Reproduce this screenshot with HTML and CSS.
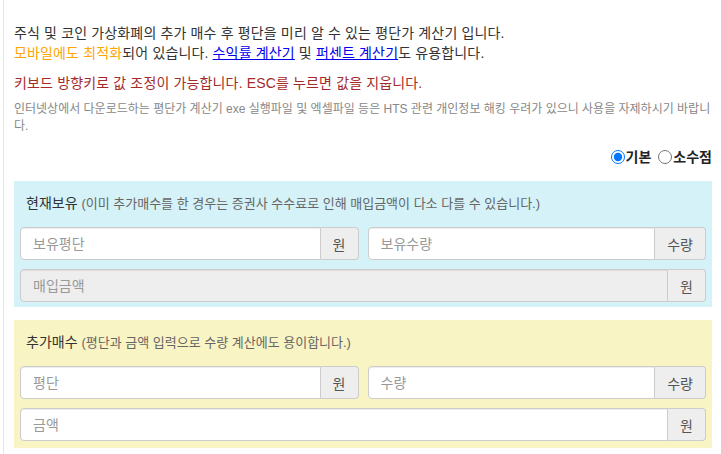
FILE: index.html
```html
<!DOCTYPE html>
<html lang="ko">
<head>
<meta charset="utf-8">
<title>평단가 계산기</title>
<link rel="stylesheet" href="styles.css">
</head>
<body>
<div class="page">
  <p class="intro">주식 및 코인 가상화폐의 추가 매수 후 평단을 미리 알 수 있는 평단가 계산기 입니다.<br><span class="orange">모바일에도 최적화</span>되어 있습니다. <a href="#">수익률 계산기</a> 및 <a href="#">퍼센트 계산기</a>도 유용합니다.</p>
  <p class="warn">키보드 방향키로 값 조정이 가능합니다. ESC를 누르면 값을 지웁니다.</p>
  <p class="notice">인터넷상에서 다운로드하는 평단가 계산기 exe 실행파일 및 엑셀파일 등은 HTS 관련 개인정보 해킹 우려가 있으니 사용을 자제하시기 바랍니다.</p>
  <div class="mode">
    <label class="opt"><input type="radio" name="mode" checked>기본</label>
    <label class="opt"><input type="radio" name="mode">소수점</label>
  </div>

  <section class="panel panel-info">
    <div class="panel-title">현재보유 <small>(이미 추가매수를 한 경우는 증권사 수수료로 인해 매입금액이 다소 다를 수 있습니다.)</small></div>
    <div class="row">
      <div class="group"><input class="field" type="text" placeholder="보유평단"><span class="addon">원</span></div>
      <div class="group"><input class="field" type="text" placeholder="보유수량"><span class="addon">수량</span></div>
    </div>
    <div class="row">
      <div class="group"><input class="field" type="text" placeholder="매입금액" disabled><span class="addon">원</span></div>
    </div>
  </section>

  <section class="panel panel-warn">
    <div class="panel-title">추가매수 <small>(평단과 금액 입력으로 수량 계산에도 용이합니다.)</small></div>
    <div class="row">
      <div class="group"><input class="field" type="text" placeholder="평단"><span class="addon">원</span></div>
      <div class="group"><input class="field" type="text" placeholder="수량"><span class="addon">수량</span></div>
    </div>
    <div class="row">
      <div class="group"><input class="field" type="text" placeholder="금액"><span class="addon">원</span></div>
    </div>
  </section>
</div>
</body>
</html>
```

FILE: styles.css
```css
html, body {
  margin: 0;
  padding: 0;
  background: #fff;
}
body {
  font-family: "Liberation Sans", "Noto Sans CJK KR", Arial, sans-serif;
  font-size: 14px;
  color: #333;
  overflow: hidden;
}
.page {
  box-sizing: border-box;
  min-height: 100vh;
  margin-left: 3px;
  border-left: 1px solid #e6e6e6;
  padding: 23px 9px 0 10px;
}
p {
  margin: 0;
}
.intro {
  line-height: 20px;
  color: #333;
  letter-spacing: 0.15px;
}
.orange {
  color: #ffa500;
}
.intro a {
  color: #0000ee;
  text-decoration: underline;
}
.warn {
  margin-top: 10px;
  line-height: 20px;
  color: #a52a2a;
  letter-spacing: 0.15px;
}
.notice {
  margin-top: 8px;
  font-size: 12px;
  line-height: 17px;
  color: #888;
}
.mode {
  margin-top: 12px;
  display: flex;
  justify-content: flex-end;
  line-height: 20px;
  font-weight: bold;
  color: #222;
}
.opt {
  display: flex;
  align-items: center;
}
.opt + .opt {
  margin-left: 7px;
}
.opt input {
  margin: 0 1px 0 0;
  width: 14px;
  height: 14px;
}
.panel {
  margin-top: 14px;
  padding: 12px 6px 5px;
}
.panel-info {
  background: #d4f2f7;
}
.panel-warn {
  margin-top: 13px;
  background: #f9f4c4;
  padding-bottom: 7px;
}
.panel-title {
  padding: 0 6px;
  height: 20px;
  line-height: 20px;
  color: #333;
  margin-bottom: 14px;
  white-space: nowrap;
}
.panel-title small {
  font-size: 13px;
  line-height: 20px;
  color: #666;
}
.row {
  display: flex;
  gap: 9px;
}
.row + .row {
  margin-top: 9px;
}
.group {
  flex: 1;
  display: flex;
  height: 33px;
}
.field {
  flex: 1;
  min-width: 0;
  box-sizing: border-box;
  height: 33px;
  margin: 0;
  padding: 0 12px;
  border: 1px solid #ccc;
  border-radius: 4px 0 0 4px;
  background: #fff;
  font-family: inherit;
  font-size: 14px;
  color: #555;
  box-shadow: inset 0 1px 1px rgba(0,0,0,0.075);
  outline: none;
}
.field::placeholder {
  color: #999;
}
.field:disabled {
  background: #eee;
}
.addon {
  box-sizing: border-box;
  height: 33px;
  display: flex;
  align-items: center;
  padding: 0 12px;
  border: 1px solid #ccc;
  border-left: 0;
  border-radius: 0 4px 4px 0;
  background: #eee;
  color: #555;
  font-size: 14px;
}
```
